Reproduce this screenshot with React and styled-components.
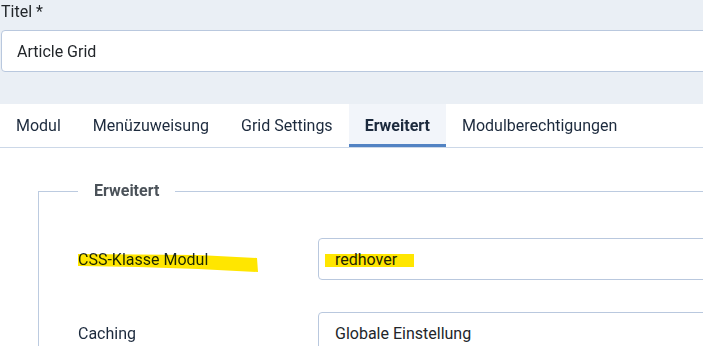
import styled, { createGlobalStyle } from "styled-components";

const Global = createGlobalStyle`
  body {
    margin: 0;
    background: #eaeff5;
    font-family: Roboto, "Liberation Sans", sans-serif;
    color: #22262a;
    overflow: hidden;
  }
`;

const Seite = styled.div`
  width: 703px;
  height: 346px;
  overflow: hidden;
`;

const Kopf = styled.div`
  height: 104px;
  padding: 2px 0 0 1px;
  box-sizing: border-box;
`;

const Label = styled.label`
  display: block;
  font-size: 16px;
  line-height: 19px;
  height: 28px;
  color: #22262a;
`;

const Feld = styled.div`
  position: relative;
  box-sizing: border-box;
  height: 42px;
  width: ${(p) => p.breite || "760px"};
  background: #fff;
  border: 1px solid #b9c8de;
  border-radius: 4px;
  padding: 0 16px;
  display: flex;
  align-items: center;
  font-size: 16px;
  color: #22262a;
`;

const Panel = styled.div`
  background: #fff;
  height: 242px;
`;

const TabLeiste = styled.div`
  display: flex;
  height: 43px;
  border-bottom: 1px solid #ccd8e8;
`;

const Tab = styled.div`
  padding: 0 16px;
  display: flex;
  align-items: center;
  font-size: 16px;
  color: #1c2a3d;
  font-weight: ${(p) => (p.aktiv ? 700 : 400)};
  background: ${(p) => (p.aktiv ? "#f2f5fa" : "transparent")};
  box-shadow: ${(p) => (p.aktiv ? "inset 0 -3px 0 #5283c3" : "none")};
`;

const Gruppe = styled.fieldset`
  margin: 32px 0 0 38px;
  width: 760px;
  border: 1px solid #bccbe0;
  padding: 36px 0 0 39px;
  min-width: 0;
`;

const Titel = styled.legend`
  padding: 0 16px;
  font-size: 16px;
  font-weight: 700;
  line-height: 22px;
  color: #4b5259;
`;

const Zeile = styled.div`
  display: grid;
  grid-template-columns: 240px 1fr;
  align-items: center;
  margin-bottom: 32px;
`;

const ZeilenText = styled.span`
  position: relative;
  font-size: 16px;
  color: #1c2a3d;
  justify-self: start;
`;

const Marker = styled.svg`
  position: absolute;
  mix-blend-mode: multiply;
  pointer-events: none;
`;

export default function App() {
  return (
    <Seite>
      <Global />
      <Kopf>
        <Label>Titel *</Label>
        <Feld breite="740px" style={{ paddingLeft: 15 }}>Article Grid</Feld>
      </Kopf>
      <Panel>
        <TabLeiste>
          <Tab>Modul</Tab>
          <Tab>Menüzuweisung</Tab>
          <Tab>Grid Settings</Tab>
          <Tab aktiv>Erweitert</Tab>
          <Tab>Modulberechtigungen</Tab>
        </TabLeiste>
        <Gruppe>
          <Titel>Erweitert</Titel>
          <Zeile>
            <ZeilenText>
              CSS-Klasse Modul
              <Marker width="182" height="20" style={{ left: 0, top: 4 }}>
                <path d="M0 0 L120 1 L179 4 L180 18 L120 15 L60 13 L0 12 Z" fill="#ffe600" />
              </Marker>
            </ZeilenText>
            <Feld>
              redhover
              <Marker width="90" height="14" style={{ left: 6, top: 15 }}>
                <rect x="0" y="0" width="89" height="13" fill="#ffe600" />
              </Marker>
            </Feld>
          </Zeile>
          <Zeile>
            <ZeilenText>Caching</ZeilenText>
            <Feld>Globale Einstellung</Feld>
          </Zeile>
        </Gruppe>
      </Panel>
    </Seite>
  );
}
